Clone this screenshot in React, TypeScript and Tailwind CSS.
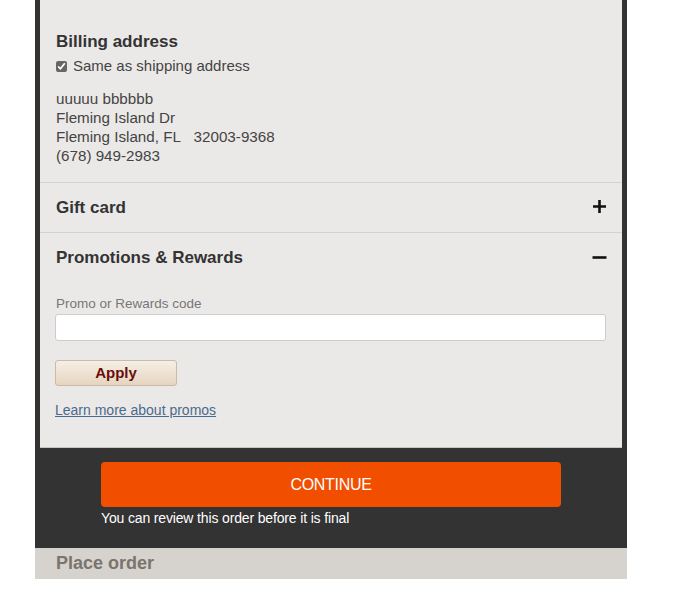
import React from 'react';

const font = { fontFamily: '"Liberation Sans", Arial, sans-serif' };

function PlusIcon() {
  return (
    <svg width="15" height="15" viewBox="0 0 15 15" className="block -mt-[2px]">
      <path d="M7.5 1v13M1 7.5h13" stroke="#111" strokeWidth="2.6" />
    </svg>
  );
}

function MinusIcon() {
  return (
    <svg width="15" height="15" viewBox="0 0 15 15" className="block -mt-[2px]">
      <path d="M0.5 7.5h14" stroke="#111" strokeWidth="2.6" />
    </svg>
  );
}

export default function App() {
  return (
    <div className="min-h-[590px] bg-white" style={font}>
      <div className="ml-[35px] w-[592px]">
        {/* Checkout panel */}
        <div className="bg-[#333333] px-[5px]">
          <div className="bg-[#ebe9e7] border-b border-[#c9c6c2]">
            {/* Billing address */}
            <div className="px-4 pt-[32px] pb-[17px] border-b border-[#d4d1ce] text-[#333]">
              <h2 className="text-[17px] font-bold leading-[20px]">Billing address</h2>
              <label className="mt-[5px] flex items-center gap-[6px] text-[15px] leading-[18px] text-[#444]">
                <input type="checkbox" defaultChecked className="h-[11px] w-[11px] accent-[#666]" />
                Same as shipping address
              </label>
              <div className="mt-[14px] text-[15.2px] leading-[19px] text-[#444]">
                <div>uuuuu bbbbbb</div>
                <div>Fleming Island Dr</div>
                <div>Fleming Island, FL&nbsp;&nbsp;&nbsp;32003-9368</div>
                <div>(678) 949-2983</div>
              </div>
            </div>

            {/* Gift card */}
            <div className="flex h-[50px] items-center justify-between border-b border-[#d4d1ce] pl-4 pr-[15px]">
              <span className="text-[17px] font-bold text-[#333]">Gift card</span>
              <PlusIcon />
            </div>

            {/* Promotions */}
            <div className="pl-4 pr-[15px]">
              <div className="flex h-[50px] items-center justify-between">
                <span className="text-[17px] font-bold text-[#333]">Promotions &amp; Rewards</span>
                <MinusIcon />
              </div>
              <div className="pt-[13px] pb-[29px]">
                <div className="text-[13.5px] leading-[16px] text-[#777]">Promo or Rewards code</div>
                <input
                  type="text"
                  className="mt-[2px] block h-[27px] w-[551px] -ml-px rounded-[3px] border border-[#cccccc] bg-white"
                />
                <button className="mt-[19px] -ml-px flex h-[26px] w-[122px] items-center justify-center rounded-[3px] border border-[#cbbba6] bg-gradient-to-b from-[#f5efe6] to-[#e5d5bf] text-[15px] font-bold text-[#6a0c0c]">
                  Apply
                </button>
                <a href="#" className="mt-[16px] -ml-px block text-[14px] leading-[16px] text-[#4a6a8e] underline">
                  Learn more about promos
                </a>
              </div>
            </div>
          </div>

          {/* Continue */}
          <div className="pl-[61px] pt-[14px] pb-[22px]">
            <button className="flex h-[45px] w-[460px] items-center justify-center rounded-[4px] bg-[#f24e00] text-[16px] text-white tracking-[-0.3px]">
              CONTINUE
            </button>
            <div className="mt-[3px] text-[14px] leading-[16px] text-white tracking-[-0.15px]">
              You can review this order before it is final
            </div>
          </div>
        </div>

        {/* Place order */}
        <div className="flex h-[31px] items-center bg-[#d6d2cd] pl-[21px] text-[18px] font-bold text-[#7a746f]">
          Place order
        </div>
      </div>
    </div>
  );
}
